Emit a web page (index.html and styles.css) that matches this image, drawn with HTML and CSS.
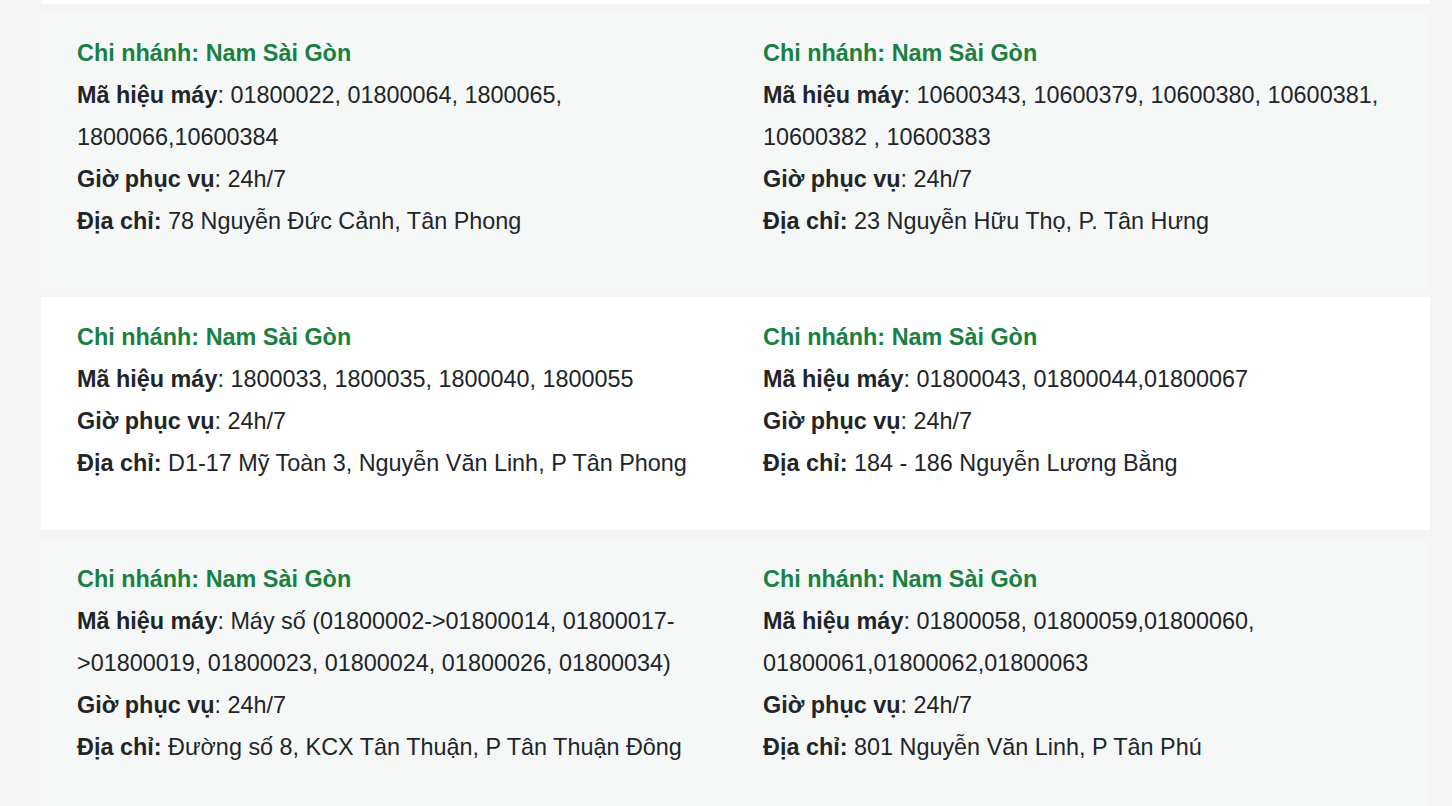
FILE: index.html
```html
<!DOCTYPE html>
<html lang="vi">
<head>
<meta charset="utf-8">
<title>Chi nhánh</title>
<link rel="stylesheet" href="styles.css">
</head>
<body>
<div class="list">
  <div class="row row-white row-tail"></div>

  <div class="row row-gray">
    <div class="item">
      <p class="title">Chi nhánh: Nam Sài Gòn</p>
      <p><b>Mã hiệu máy</b>: 01800022, 01800064, 1800065, 1800066,10600384</p>
      <p><b>Giờ phục vụ</b>: 24h/7</p>
      <p><b>Địa chỉ:</b> 78 Nguyễn Đức Cảnh, Tân Phong</p>
    </div>
    <div class="item">
      <p class="title">Chi nhánh: Nam Sài Gòn</p>
      <p><b>Mã hiệu máy</b>: 10600343, 10600379, 10600380, 10600381, 10600382 , 10600383</p>
      <p><b>Giờ phục vụ</b>: 24h/7</p>
      <p><b>Địa chỉ:</b> 23 Nguyễn Hữu Thọ, P. Tân Hưng</p>
    </div>
  </div>

  <div class="row row-white">
    <div class="item">
      <p class="title">Chi nhánh: Nam Sài Gòn</p>
      <p><b>Mã hiệu máy</b>: 1800033, 1800035, 1800040, 1800055</p>
      <p><b>Giờ phục vụ</b>: 24h/7</p>
      <p><b>Địa chỉ:</b> D1-17 Mỹ Toàn 3, Nguyễn Văn Linh, P Tân Phong</p>
    </div>
    <div class="item">
      <p class="title">Chi nhánh: Nam Sài Gòn</p>
      <p><b>Mã hiệu máy</b>: 01800043, 01800044,01800067</p>
      <p><b>Giờ phục vụ</b>: 24h/7</p>
      <p><b>Địa chỉ:</b> 184 - 186 Nguyễn Lương Bằng</p>
    </div>
  </div>

  <div class="row row-gray">
    <div class="item">
      <p class="title">Chi nhánh: Nam Sài Gòn</p>
      <p><b>Mã hiệu máy</b>: Máy số (01800002-&gt;01800014, 01800017-&gt;01800019, 01800023, 01800024, 01800026, 01800034)</p>
      <p><b>Giờ phục vụ</b>: 24h/7</p>
      <p><b>Địa chỉ:</b> Đường số 8, KCX Tân Thuận, P Tân Thuận Đông</p>
    </div>
    <div class="item">
      <p class="title">Chi nhánh: Nam Sài Gòn</p>
      <p><b>Mã hiệu máy</b>: 01800058, 01800059,01800060, 01800061,01800062,01800063</p>
      <p><b>Giờ phục vụ</b>: 24h/7</p>
      <p><b>Địa chỉ:</b> 801 Nguyễn Văn Linh, P Tân Phú</p>
    </div>
  </div>
</div>
</body>
</html>
```

FILE: styles.css
```css
html, body {
  margin: 0;
  padding: 0;
}

body {
  background: #f5f5f5;
  font-family: "Liberation Sans", Arial, Helvetica, sans-serif;
  color: #212529;
  font-size: 23.4px;
  line-height: 42px;
}

.list {
  width: 1389px;
  margin-left: 41px;
  display: flex;
  flex-direction: column;
  gap: 9px;
}

.row {
  display: grid;
  grid-template-columns: 1fr 1fr;
  column-gap: 55px;
  padding: 19px 36px 46px;
}

.row-tail {
  height: 4px;
  padding: 0;
}

.row-white {
  background: #ffffff;
}

.row-gray {
  background: #f6f8f8;
}

.item p {
  margin: 0;
}

.item b {
  font-weight: 700;
}

.title {
  color: #198043;
  font-weight: 700;
}
```
